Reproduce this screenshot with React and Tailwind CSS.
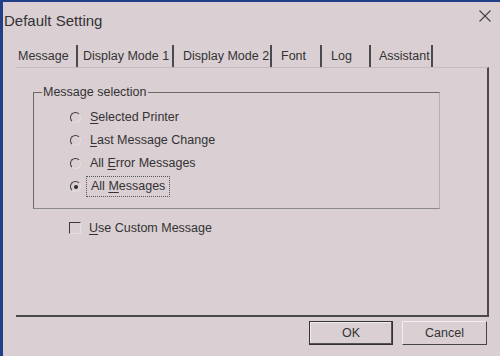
import React from 'react';

const tabs = [
  { label: 'Message', w: 'w-[68px]', pl: 'pl-[8px]' },
  { label: 'Display Mode 1', w: 'w-[96px]', pl: 'pl-[5px]' },
  { label: 'Display Mode 2', w: 'w-[98px]', pl: 'pl-[9px]' },
  { label: 'Font', w: 'w-[50px]', pl: 'pl-[9px]' },
  { label: 'Log', w: 'w-[49px]', pl: 'pl-[9px]' },
  { label: 'Assistant', w: 'w-[62px]', pl: 'pl-[8px]' },
];

const options = [
  { key: 'S', rest: 'elected Printer' },
  { key: 'L', rest: 'ast Message Change' },
  { pre: 'All ', key: 'E', rest: 'rror Messages' },
  { pre: 'All ', key: 'M', rest: 'essages', checked: true },
];

function Radio({ checked }) {
  return (
    <span className="relative w-[11px] h-[11px] rounded-full border-[1.5px] border-t-[#3a3a3a] border-l-[#3a3a3a] border-r-[#e6dde0] border-b-[#e6dde0] flex items-center justify-center">
      {checked && <span className="w-[4px] h-[4px] rounded-full bg-[#2a2a2a]" />}
    </span>
  );
}

export default function App() {
  return (
    <div className="w-[500px] h-[356px] overflow-hidden bg-[#1f3f86]">
      <div className="w-[500px] h-[356px] mt-[2px] ml-[3px] bg-[#dacfd3] text-[#333] text-[12.5px] leading-none flex flex-col" style={{ fontFamily: '"Liberation Sans", Arial, sans-serif' }}>

        {/* Title */}
        <div className="h-[43px] flex justify-between items-start pt-[11px] pl-[1px] pr-[12px]">
          <span className="text-[15px]">Default Setting</span>
          <svg width="12" height="12" viewBox="0 0 12 12" className="mt-[-3px]">
            <path d="M0.5 0.5 L11.5 11.5 M11.5 0.5 L0.5 11.5" stroke="#444" strokeWidth="1.1" />
          </svg>
        </div>

        {/* Tabs */}
        <div className="flex ml-[7px] h-[22px] items-stretch">
          {tabs.map(t => (
            <div key={t.label} className={`${t.w} ${t.pl} border-r-2 border-[#4a4a4a] flex items-center pt-[1px]`}>
              {t.label}
            </div>
          ))}
        </div>

        {/* Panel */}
        <div className="ml-[13px] w-[473px] h-[250px] border-r-2 border-b-2 border-[#4a4a4a] border-t border-t-[#c8bcc0] pt-[24px] pl-[17px]">
          <div className="relative w-[407px] h-[117px] border border-[#6a6a6a] border-r-[#b8adb0] border-b-[#8a8a8a] pt-[18px] pl-[36px]">
            <span className="absolute -top-[7px] left-[8px] px-[1px] bg-[#dacfd3]">Message selection</span>
            <div className="flex flex-col gap-[10px]">
              {options.map(o => (
                <div key={o.rest} className="flex items-center gap-[9px] h-[13px]">
                  <Radio checked={o.checked} />
                  <span className={o.checked ? 'outline outline-1 outline-dotted outline-[#555] outline-offset-[3px] px-[1px]' : ''}>
                    {o.pre}<span className="underline underline-offset-2">{o.key}</span>{o.rest}
                  </span>
                </div>
              ))}
            </div>
          </div>

          <div className="flex items-center gap-[8px] mt-[13px] ml-[36px]">
            <span className="w-[12px] h-[12px] border-[1.5px] border-t-[#3a3a3a] border-l-[#3a3a3a] border-r-[#e6dde0] border-b-[#e6dde0]" />
            <span><span className="underline underline-offset-2">U</span>se Custom Message</span>
          </div>
        </div>

        {/* Buttons */}
        <div className="flex gap-[9px] ml-[306px] mt-[4px]">
          <button className="w-[84px] h-[24px] border border-[#333] shadow-[inset_-1px_-1px_0_#555,inset_1px_1px_0_#eee] bg-[#dacfd3]">OK</button>
          <button className="w-[85px] h-[24px] border border-t-[#f2eef0] border-l-[#f2eef0] border-r-[#444] border-b-[#444] bg-[#dacfd3]">Cancel</button>
        </div>
      </div>
    </div>
  );
}
